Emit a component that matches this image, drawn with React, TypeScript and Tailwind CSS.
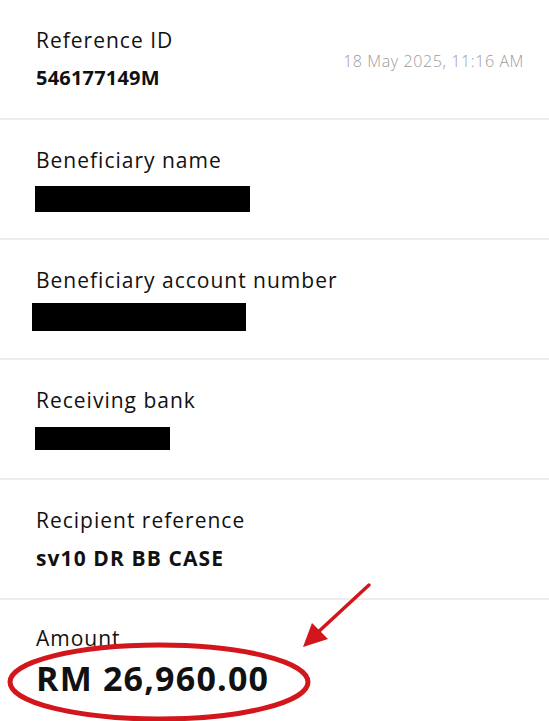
import React from 'react'

const font = { fontFamily: '"Open Sans", "Liberation Sans", sans-serif' }

const labelCls = 'text-[21px] leading-7 text-[#111] tracking-[1px]'

function Row({ label, children }: { label: string; children: React.ReactNode }) {
  return (
    <div className="h-[120px] border-b-2 border-[#ededed] pl-[36px] pt-[26px]">
      <div className={labelCls}>{label}</div>
      {children}
    </div>
  )
}

function Bar({ w, h, mt, ml = 0 }: { w: number; h: number; mt: number; ml?: number }) {
  return <div className="bg-black" style={{ width: w, height: h, marginTop: mt, marginLeft: ml }} />
}

export default function App() {
  return (
    <div className="relative w-[549px] h-[721px] overflow-hidden bg-white" style={font}>
      <div className="h-[120px] border-b-2 border-[#ededed] pl-[36px] pr-[25px] pt-[26px] flex justify-between">
        <div>
          <div className={labelCls}>Reference ID</div>
          <div className="mt-[10px] text-[20px] leading-7 font-bold text-[#111] tracking-[0.2px]">546177149M</div>
        </div>
        <div className="mt-[21px] text-[16px] leading-7 font-light text-[#9b9b9b] tracking-[0.6px]">18 May 2025, 11:16 AM</div>
      </div>

      <Row label="Beneficiary name">
        <Bar w={215} h={26} mt={12} ml={-1} />
      </Row>
      <Row label="Beneficiary account number">
        <Bar w={214} h={28} mt={9} ml={-4} />
      </Row>
      <Row label="Receiving bank">
        <Bar w={135} h={23} mt={13} ml={-1} />
      </Row>
      <Row label="Recipient reference">
        <div className="mt-[10px] text-[21px] leading-7 font-bold text-[#111] tracking-[1.1px]">sv10 DR BB CASE</div>
      </Row>

      <div className="pl-[36px] pt-[24px]">
        <div className={labelCls}>Amount</div>
        <div className="mt-[4px] text-[34px] leading-[44px] font-bold text-[#111] tracking-[1.2px]">RM 26,960.00</div>
      </div>

      <svg className="absolute inset-0 pointer-events-none" width="549" height="721" viewBox="0 0 549 721">
        <ellipse cx="159" cy="682" rx="149" ry="37" fill="none" stroke="#d2161c" strokeWidth="5" />
        <line x1="369" y1="585" x2="316" y2="634" stroke="#d2161c" strokeWidth="3.5" strokeLinecap="round" />
        <polygon points="303,647 312,623 328,639" fill="#d2161c" />
      </svg>
    </div>
  )
}
